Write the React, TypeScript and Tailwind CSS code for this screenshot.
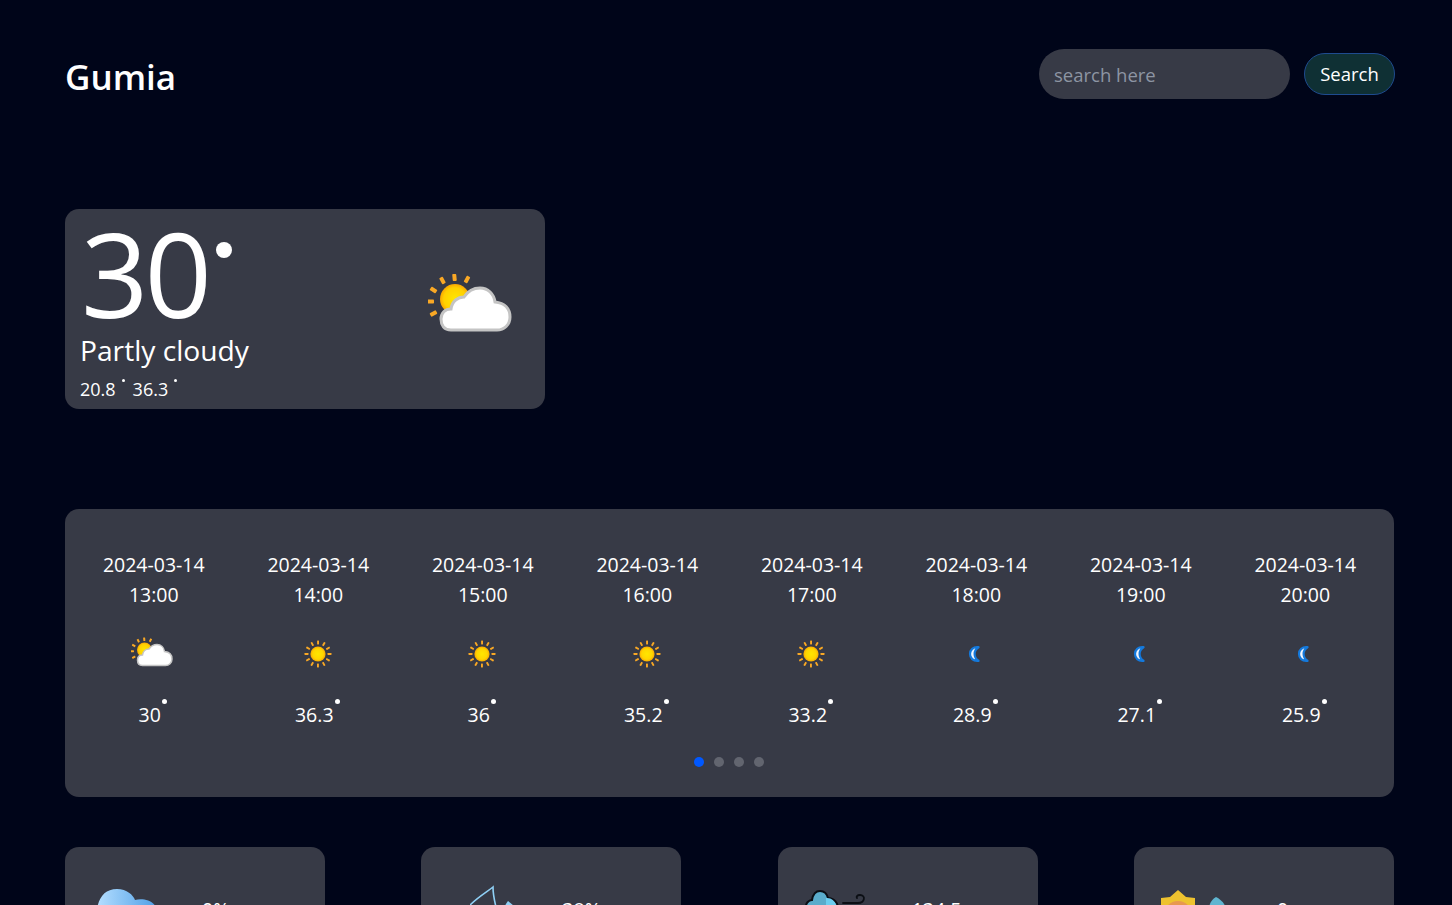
import React from 'react';

const hours = [
  { time: '13:00', temp: '30', icon: 'cloud' },
  { time: '14:00', temp: '36.3', icon: 'sun' },
  { time: '15:00', temp: '36', icon: 'sun' },
  { time: '16:00', temp: '35.2', icon: 'sun' },
  { time: '17:00', temp: '33.2', icon: 'sun' },
  { time: '18:00', temp: '28.9', icon: 'moon' },
  { time: '19:00', temp: '27.1', icon: 'moon' },
  { time: '20:00', temp: '25.9', icon: 'moon' },
];

const rays = [0, 30, 60, 90, 120, 150, 180, 210, 240, 270, 300, 330];

const SunIcon = () => (
  <svg viewBox="0 0 30 30" className="w-[30px] h-[30px] mr-[1px]">
    <defs>
      <radialGradient id="sunFill">
        <stop offset="0%" stopColor="#ffe600" />
        <stop offset="70%" stopColor="#ffd500" />
        <stop offset="100%" stopColor="#f9a602" />
      </radialGradient>
    </defs>
    {rays.map(r => (
      <rect key={r} x="14.1" y="1.5" width="1.9" height="4" rx="0.4" fill="#f9a825" transform={`rotate(${r} 15 15)`} />
    ))}
    <circle cx="15" cy="15" r="7.6" fill="url(#sunFill)" />
  </svg>
);

const MoonIcon = () => (
  <svg viewBox="0 0 14 16" className="w-[14px] h-[16px] mr-[2px]">
    <path d="M10.5 1.2 C5 0.6 2 4 2 8 C2 12 5 15.4 10.5 14.8 C7.6 13 6.6 10.6 6.6 8 C6.6 5.4 7.6 3 10.5 1.2 Z" fill="#f1f7ff" stroke="#1479dc" strokeWidth="2.2" strokeLinejoin="round" />
  </svg>
);

const CloudIcon = ({ large }: { large?: boolean }) => (
  <svg viewBox="0 0 84 60" className={large ? 'w-[84px] h-[60px] blur-[0.4px]' : 'w-[42px] h-[30px] mr-[4px] mb-[4px]'}>
    <defs>
      <radialGradient id={large ? 'csunL' : 'csunS'}>
        <stop offset="0%" stopColor="#ffe600" />
        <stop offset="75%" stopColor="#ffd000" />
        <stop offset="100%" stopColor="#f9a602" />
      </radialGradient>
    </defs>
    <g fill="#f9a825">
      <rect x="24.5" y="1" width="4" height="7" rx="0.8" transform="rotate(-5 26.5 4.5)" />
      <rect x="12.5" y="4" width="4" height="7" rx="0.8" transform="rotate(-28 14.5 7.5)" />
      <rect x="3.5" y="13.5" width="4" height="7" rx="0.8" transform="rotate(-58 5.5 17)" />
      <rect x="0.5" y="25" width="4" height="7.5" rx="0.8" transform="rotate(90 2.5 28.5)" />
      <rect x="3.5" y="37" width="4" height="7" rx="0.8" transform="rotate(60 5.5 40.5)" />
      <rect x="37" y="3" width="4" height="7" rx="0.8" transform="rotate(28 39 6.5)" />
    </g>
    <circle cx="27" cy="26" r="15" fill={`url(#${large ? 'csunL' : 'csunS'})`} />
    <path d="M23 57 C16 57 13 52 13 46 C13 40 17 36 23 36 C24 28 30 24 36 24 C40 18 46 15 52 15 C60 15 66 21 67 29 C77 30 82 36 82 44 C82 52 76 57 69 57 Z" fill="#ffffff" stroke="#c4c4c4" strokeWidth="3" />
  </svg>
);

const WeatherIcon = ({ name }: { name: string }) => {
  if (name === 'sun') return <SunIcon />;
  if (name === 'moon') return <MoonIcon />;
  return <CloudIcon />;
};

const RainCloud = () => (
  <svg viewBox="0 0 64 64" className="w-16 h-16">
    <defs>
      <linearGradient id="rainFill" x1="0" x2="1" y1="0" y2="0">
        <stop offset="0%" stopColor="#b4deff" />
        <stop offset="100%" stopColor="#4f9fe6" />
      </linearGradient>
    </defs>
    <path d="M0 24 C2 12 8 4 20 4 C30 4 36 10 38 15 C44 13 56 14 60 24 L60 54 L0 54 Z" fill="url(#rainFill)" />
  </svg>
);

const HumidityDrop = () => (
  <svg viewBox="0 0 64 64" className="w-16 h-16">
    <path d="M0 20 C8 12 18 6 23 2 C23 8 24 14 26 22 C32 36 26 54 12 52" fill="none" stroke="#8fd0f5" strokeWidth="1.6" />
    <path d="M38 16 C35 20 33 24 34 28 C36 34 46 34 47 28 C47 23 42 19 38 16 Z" fill="#8fd0f5" />
  </svg>
);

const WindCloud = () => (
  <svg viewBox="0 0 64 64" className="w-16 h-16">
    <path d="M2 24 C1 18 5 15 8 15 C9 9 12 6 16 6 C20 6 23 9 24 13 C30 13 34 18 34 24 L34 50 L2 50 Z" fill="#5aaccb" stroke="#0b0e14" strokeWidth="2" />
    <path d="M22 13 C28 12 33 18 33 24 L33 50 L22 50 Z" fill="#6ccdef" />
    <path d="M39 18 L54 18 C61 18 62 10 56 10 C53 10 52 12 53 13" fill="none" stroke="#0b0e14" strokeWidth="1.8" strokeLinecap="round" />
  </svg>
);

const SunDrop = () => (
  <svg viewBox="0 0 72 64" className="w-[72px] h-16">
    <path d="M1 13 L10 12 L18 5 L26 12 L35 13 L35 50 L1 50 Z" fill="#eec22f" />
    <circle cx="18" cy="30" r="14" fill="#e8984f" />
    <path d="M56 12 C52 14 50 18 49 22 C48 34 66 36 66 24 C65 18 60 14 56 12 Z" fill="#5fb5d0" />
  </svg>
);

const stats = [
  { value: '0%', icon: <RainCloud />, pad: 'pl-[32px]', gap: 'ml-[41px]' },
  { value: '38%', icon: <HumidityDrop />, pad: 'pl-[49px]', gap: 'ml-[28px]' },
  { value: '134.5', icon: <WindCloud />, pad: 'pl-[26px]', gap: 'ml-[44px]' },
  { value: '0', icon: <SunDrop />, pad: 'pl-[26px]', gap: 'ml-[45px]' },
];

const Degree = ({ className }: { className: string }) => (
  <span className={`inline-block rounded-full bg-white ${className}`} />
);

export default function App() {
  return (
    <div className="h-screen overflow-hidden bg-[#000519] text-white pl-[65px] pr-[57px] font-['Open_Sans','Noto_Sans',sans-serif]">
      <header className="flex items-center justify-between h-[150px] pb-[2px]">
        <h1 className="text-[35px] font-semibold leading-none mt-[4px]">Gumia</h1>
        <div className="flex items-center gap-[14px]">
          <input
            placeholder="search here"
            className="w-[251px] h-[50px] rounded-[25px] bg-[#373a46] px-[15px] text-[18.5px] outline-none placeholder:text-[#8d95a3]"
          />
          <button className="h-[42px] w-[91px] rounded-[21px] border border-[#1e4b8f] bg-[#0f3034] text-[18.5px] text-white">Search</button>
        </div>
      </header>

      <section className="mt-[59px] w-[480px] h-[200px] rounded-[14px] bg-[#373a46] flex items-start justify-between pl-[15px] pr-[33px] pt-[8px]">
        <div>
          <div className="flex items-start h-[112px]">
            <span className="text-[118px] leading-[112px] tracking-[-4px] ml-[1px]">30</span>
            <Degree className="w-4 h-4 mt-[25px] ml-[8px]" />
          </div>
          <p className="text-[28.2px] leading-[40px] mt-[1px]">Partly cloudy</p>
          <p className="flex items-start text-[18px] leading-[28px] mt-[5px]">
            20.8<Degree className="w-[3px] h-[3px] mt-[4px] ml-[6px] mr-[8px]" />36.3<Degree className="w-[3px] h-[3px] mt-[4px] ml-[6px]" />
          </p>
        </div>
        <div className="mt-[56px]"><CloudIcon large /></div>
      </section>

      <section className="mt-[100px] w-[1329px] h-[288px] rounded-[14px] bg-[#373a46] px-[6.5px] pt-[41px]">
        <div className="grid grid-cols-8">
          {hours.map(h => (
            <div key={h.time} className="flex flex-col items-center">
              <span className="text-[19.5px] leading-[30px]">2024-03-14</span>
              <span className="text-[19.5px] leading-[30px]">{h.time}</span>
              <div className="h-[30px] mt-[29px] flex items-center justify-center"><WeatherIcon name={h.icon} /></div>
              <div className="flex items-start mt-[31px] -ml-[2px]">
                <span className="text-[19.5px] leading-[30px]">{h.temp}</span>
                <Degree className="w-[5px] h-[5px] mt-[-1px] ml-[1px]" />
              </div>
            </div>
          ))}
        </div>
        <div className="flex justify-center gap-[10px] mt-[27px] pr-[1px]">
          <span className="w-[10px] h-[10px] rounded-full bg-[#0058ff]" />
          <span className="w-[10px] h-[10px] rounded-full bg-[#62656f]" />
          <span className="w-[10px] h-[10px] rounded-full bg-[#62656f]" />
          <span className="w-[10px] h-[10px] rounded-full bg-[#62656f]" />
        </div>
      </section>

      <section className="mt-[50px] w-[1329px] flex justify-between">
        {stats.map(s => (
          <div key={s.value} className={`w-[260px] h-[200px] rounded-[14px] bg-[#373a46] flex items-start pt-[38px] ${s.pad}`}>
            {s.icon}
            <span className={`text-[19.5px] leading-[30px] mt-[10px] ${s.gap}`}>{s.value}</span>
          </div>
        ))}
      </section>
    </div>
  );
}
